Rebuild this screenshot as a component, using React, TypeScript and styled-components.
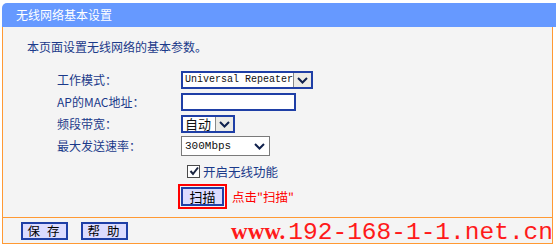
import React from "react";
import styled, { createGlobalStyle } from "styled-components";

const GlobalStyle = createGlobalStyle`
    html, body {
        margin: 0;
        padding: 0;
        background: #ffffff;
        font-family: "Noto Sans CJK SC", "Liberation Sans", sans-serif;
        font-size: 12px;
    }
`;

function Chevron() {
    return (
        <svg width="11" height="7" viewBox="0 0 11 7">
            <polyline points="1,1 5.5,5.5 10,1" fill="none" stroke="#10214d" strokeWidth="2" />
        </svg>
    );
}

function CheckMark() {
    return (
        <svg width="10" height="10" viewBox="0 0 10 10">
            <polyline points="1.5,5 4,8 9,1.5" fill="none" stroke="#1a2440" strokeWidth="2" />
        </svg>
    );
}

export default function App() {
    return (
        <Page>
            <GlobalStyle />
            <TitleBar>无线网络基本设置</TitleBar>
            <Panel>
                <Intro>本页面设置无线网络的基本参数。</Intro>
                <FormGrid>
                    <Label>工作模式：</Label>
                    <SelectBox $width={132}>
                        <SelectText $size={10}>Universal Repeater</SelectText>
                        <ArrowButton>
                            <Chevron />
                        </ArrowButton>
                    </SelectBox>

                    <Label>AP的MAC地址：</Label>
                    <TextInput />

                    <Label>频段带宽：</Label>
                    <SelectBox $width={54}>
                        <SelectText $cjk $size={13}>自动</SelectText>
                        <ArrowButton>
                            <Chevron />
                        </ArrowButton>
                    </SelectBox>

                    <Label>最大发送速率：</Label>
                    <PlainSelect>
                        <SelectText $size={11}>300Mbps</SelectText>
                        <PlainArrow>
                            <Chevron />
                        </PlainArrow>
                    </PlainSelect>
                </FormGrid>

                <CheckRow>
                    <CheckBox>
                        <CheckMark />
                    </CheckBox>
                    <CheckLabel>开启无线功能</CheckLabel>
                </CheckRow>

                <ScanRow>
                    <Highlight>
                        <ScanButton>扫描</ScanButton>
                    </Highlight>
                    <Hint>点击"扫描"</Hint>
                </ScanRow>
            </Panel>
            <Footer>
                <FooterButton>保 存</FooterButton>
                <FooterButton>帮 助</FooterButton>
                <Watermark>
                    <Www>www.</Www>
                    <Domain>192-168-1-1.net.cn</Domain>
                </Watermark>
            </Footer>
        </Page>
    );
}

const Page = styled.div`
    width: 554px;
    margin: 3px 0 0 2px;
`;

const TitleBar = styled.div`
    height: 24px;
    line-height: 24px;
    padding-left: 14px;
    background: #6699ff;
    color: #ffffff;
    font-size: 12px;
    border-radius: 5px 0 0 0;
`;

const Panel = styled.div`
    width: 549px;
    background: #f4f4f4;
    border-left: 1px solid #ff9933;
    border-right: 1px solid #ff9933;
    padding: 12px 0 8px 0;
`;

const Intro = styled.div`
    height: 16px;
    line-height: 16px;
    padding-left: 24px;
    color: #1b3a8a;
    font-size: 12px;
    margin-bottom: 14px;
`;

const FormGrid = styled.div`
    display: grid;
    grid-template-columns: 124px auto;
    grid-auto-rows: 22px;
    align-items: center;
    justify-items: start;
    padding-left: 54px;
`;

const Label = styled.div`
    color: #1b3a8a;
    font-size: 12px;
    line-height: 16px;
`;

const SelectBox = styled.div<{ $width: number }>`
    box-sizing: border-box;
    width: ${(p) => p.$width}px;
    height: 18px;
    display: flex;
    align-items: center;
    background: #ffffff;
    border: 2px solid #1f3fa6;
`;

const SelectText = styled.span<{ $cjk?: boolean; $size: number }>`
    flex: 1;
    padding-left: 2px;
    font-family: ${(p) => (p.$cjk ? `"Noto Sans CJK SC", sans-serif` : `"Liberation Mono", monospace`)};
    font-size: ${(p) => p.$size}px;
    line-height: 14px;
    color: #111111;
    white-space: nowrap;
`;

const ArrowButton = styled.div`
    box-sizing: border-box;
    flex: none;
    width: 18px;
    height: 14px;
    display: flex;
    align-items: center;
    justify-content: center;
    background: #ecebe6;
    border-left: 1px solid #888888;
`;

const PlainSelect = styled.div`
    box-sizing: border-box;
    width: 89px;
    height: 20px;
    display: flex;
    align-items: center;
    background: #ffffff;
    border: 1px solid #7a7a7a;
    padding-left: 1px;
`;

const PlainArrow = styled.div`
    width: 20px;
    display: flex;
    justify-content: center;
`;

const TextInput = styled.div`
    box-sizing: border-box;
    width: 115px;
    height: 18px;
    background: #ffffff;
    border: 2px solid #1f3fa6;
`;

const CheckRow = styled.div`
    display: flex;
    align-items: center;
    height: 22px;
    margin-top: 3px;
    padding-left: 184px;
    gap: 3px;
`;

const CheckBox = styled.div`
    box-sizing: border-box;
    width: 13px;
    height: 13px;
    display: flex;
    align-items: center;
    justify-content: center;
    background: #ffffff;
    border: 1px solid #4a4a4a;
`;

const CheckLabel = styled.span`
    color: #1b3a8a;
    font-size: 12.5px;
`;

const ScanRow = styled.div`
    display: flex;
    align-items: center;
    margin-top: 2px;
    padding-left: 175px;
    gap: 5px;
`;

const Highlight = styled.div`
    border: 2px solid #ff0000;
    padding: 1px;
`;

const ScanButton = styled.div`
    box-sizing: border-box;
    width: 43px;
    height: 19px;
    line-height: 15px;
    text-align: center;
    background: #dcdcff;
    border: 2px solid #1f3fa6;
    color: #000000;
    font-size: 13px;
`;

const Hint = styled.span`
    color: #ff0000;
    font-size: 12.5px;
`;

const Footer = styled.div`
    box-sizing: border-box;
    width: 551px;
    height: 27px;
    display: flex;
    align-items: center;
    gap: 13px;
    padding-left: 18px;
    background: #f4f4f4;
    border: 1px solid #ff9933;
`;

const FooterButton = styled.div`
    box-sizing: border-box;
    width: 47px;
    height: 18px;
    line-height: 14px;
    text-align: center;
    background: #dcdcff;
    border: 2px solid #1f3fa6;
    color: #000000;
    font-size: 12.5px;
    letter-spacing: 2px;
`;

const Watermark = styled.div`
    margin-left: auto;
    display: flex;
    align-items: baseline;
    color: #ff1a1a;
    white-space: nowrap;
    margin-right: -1px;
    margin-top: 4px;
`;

const Www = styled.span`
    font-family: "Liberation Serif", serif;
    font-weight: bold;
    font-size: 23px;
    margin-right: 3px;
`;

const Domain = styled.span`
    font-family: "Liberation Mono", monospace;
    font-size: 24.5px;
`;
